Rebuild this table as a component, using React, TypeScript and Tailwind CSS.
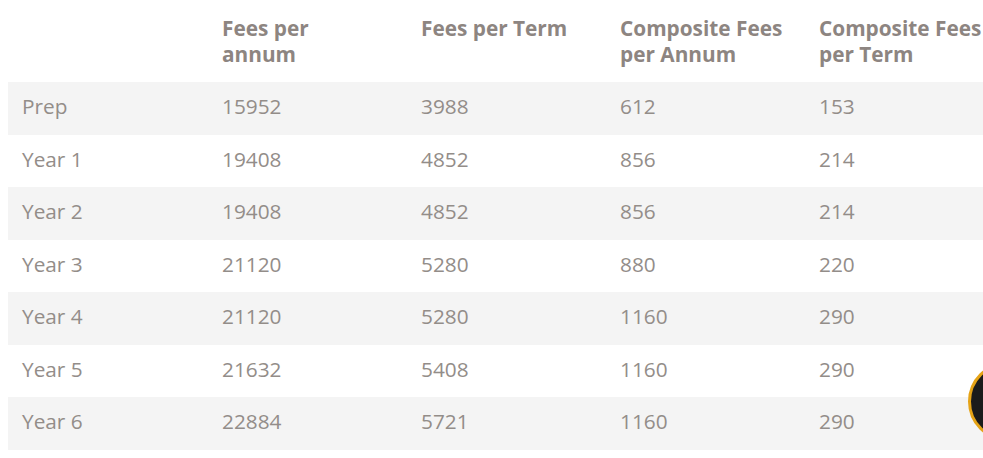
const headers: string[][] = [
  [],
  ["Fees per", "annum"],
  ["Fees per Term"],
  ["Composite Fees", "per Annum"],
  ["Composite Fees", "per Term"],
];

const rows: [string, number, number, number, number][] = [
  ["Prep", 15952, 3988, 612, 153],
  ["Year 1", 19408, 4852, 856, 214],
  ["Year 2", 19408, 4852, 856, 214],
  ["Year 3", 21120, 5280, 880, 220],
  ["Year 4", 21120, 5280, 1160, 290],
  ["Year 5", 21632, 5408, 1160, 290],
  ["Year 6", 22884, 5721, 1160, 290],
];

function FeesTable() {
  return (
    <table className="table-fixed border-collapse w-[1000px] text-left">
      <colgroup>
        <col className="w-[200px]" />
        <col className="w-[199px]" />
        <col className="w-[199px]" />
        <col className="w-[199px]" />
        <col className="w-[203px]" />
      </colgroup>
      <thead>
        <tr>
          {headers.map((lines, i) => (
            <th
              key={i}
              className="h-[82px] pl-[14px] pr-2 pt-[15px] pb-[15px] align-top text-[20.8px] leading-[26px] font-bold text-[#8d8581] whitespace-nowrap"
            >
              {lines.map((l, k) => (
                <div key={k}>{l}</div>
              ))}
            </th>
          ))}
        </tr>
      </thead>
      <tbody>
        {rows.map((row, i) => (
          <tr key={row[0]} className={i % 2 === 0 ? "bg-[#f4f4f4]" : "bg-white"}>
            {row.map((cell, j) => (
              <td
                key={j}
                className="h-[52.5px] pl-[14px] pt-[10px] pb-[14.5px] text-[20.8px] leading-[28px] text-[#938d89] whitespace-nowrap"
              >
                {cell}
              </td>
            ))}
          </tr>
        ))}
      </tbody>
    </table>
  );
}

export default function App() {
  return (
    <div className="relative w-[983px] h-[458px] overflow-hidden bg-white font-['Open_Sans',sans-serif]">
      <div className="pl-2">
        <FeesTable />
      </div>
      {/* chat launcher, cut off at the right edge */}
      <div className="absolute left-[968px] top-[362px] w-[79px] h-[79px] rounded-full bg-[#1b1b1b] border-[3px] border-[#e5a316]" />
    </div>
  );
}
